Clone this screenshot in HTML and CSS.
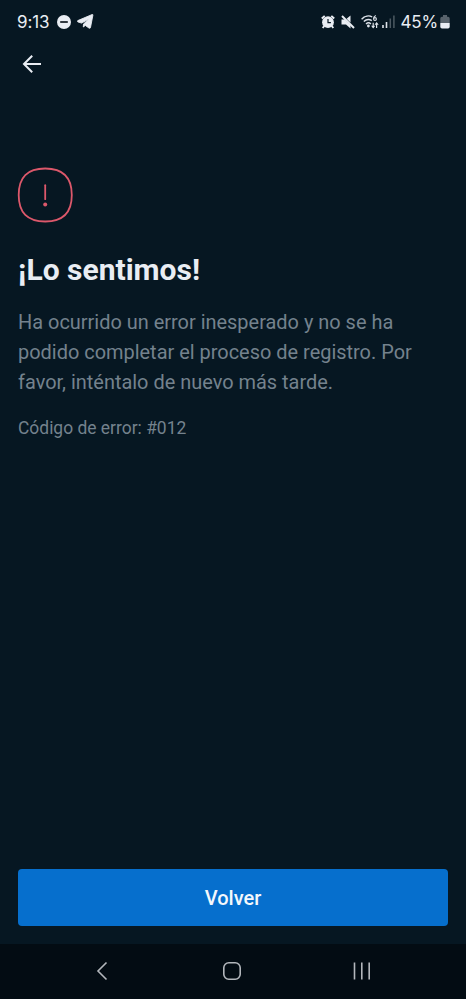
FILE: index.html
```html
<!DOCTYPE html>
<html lang="es">
<head>
<meta charset="utf-8">
<meta name="viewport" content="width=device-width, initial-scale=1">
<title>Registro</title>
<link rel="stylesheet" href="styles.css">
</head>
<body>
<div class="screen">
  <header class="status">
    <span class="clock">9:13</span>
    <svg class="dnd" width="14" height="14" viewBox="0 0 14 14"><circle cx="7" cy="7" r="7" fill="#e9edf3"/><path d="M3.2 7h7.6" stroke="#101820" stroke-width="1.7"/></svg>
    <svg class="plane" width="17" height="15" viewBox="0 0 17 15"><path d="M15.2.5.8 6.6c-.6.4-.5 1 .1 1.300l3.700 1.200L11.800 5 6.500 10l-.2 3 2-1.600 3.600 2.600c.8.5 1.400.3 1.600-.6L15.900 1.100c.1-.5-.2-.8-.7-.6z" fill="#e9edf3" stroke="#e9edf3" stroke-width=".9"/></svg>
    <span class="grow"></span>
    <svg class="alarm" width="14" height="14" viewBox="0 0 14 14"><circle cx="7" cy="7.200" r="5.900" fill="#e9edf3"/><path d="M.8 3.500 3.700.9M13.200 3.500 10.300.9M3.200 11l-1.500 2M10.800 11l1.500 2" stroke="#e9edf3" stroke-width="1.900"/><path d="M7 4v3.600h2.900" fill="none" stroke="#061722" stroke-width="1.200"/></svg>
    <svg class="mute" width="14" height="14" viewBox="0 0 14 14"><path d="M.5 4.600h3.200l5.800 5.700v3.200L5 9.400H.5zM9.500.6v6.800L5.600 3.800z" fill="#e9edf3"/><path d="m1 1 12 12" stroke="#e9edf3" stroke-width="1.900"/></svg>
    <svg class="wifi" width="18" height="14" viewBox="0 0 18 14"><g fill="none" stroke="#dce2e9" stroke-width="1.400"><path d="M.6 4.200C3.700.9 8.100.3 11.200 2M2.800 6.600c2.400-2.400 5.400-2.700 8-.9M5 9c1.500-1.400 3.500-1.400 4.900 0"/><path d="M14.800.5c-1.400.5-2.200 1.700-2.200 3.200" stroke-width="1.100"/><circle cx="14" cy="4" r="1.400" stroke-width="1.100"/><path d="M12.200 7.700v4.800M15.600 13V8.200" stroke-width="1.200"/></g><circle cx="7.400" cy="11" r="1.400" fill="#dce2e9"/><path d="m10.100 10.700 2.100 2.700 2.100-2.700zM13.500 9.800l2.100-2.700 2.100 2.700z" fill="#dce2e9"/></svg>
    <svg class="signal" width="13" height="13" viewBox="0 0 13 13"><path d="M1 10v3M4.500 7v6" stroke="#dce2e9" stroke-width="1.600"/><path d="M8.300 3.500V13M11.900.5V13" stroke="#4c5962" stroke-width="1.500"/></svg>
    <span class="percent">45%</span>
    <svg class="battery" width="10" height="14" viewBox="0 0 10 14"><path d="M3 0h4v1.700h1Q9.700 1.700 9.700 3.400V8H.3V3.400Q.3 1.700 2 1.700h1z" fill="#57626b"/><path d="M.3 8h9.400v3.800q0 1.700-1.700 1.700H2Q.3 13.500.3 11.800z" fill="#e9edf3"/></svg>
  </header>
  <nav class="toolbar">
    <svg width="20" height="20" viewBox="0 0 20 20"><path d="M19 10H2.500M10.200 1.800 2 10l8.200 8.200" fill="none" stroke="#e9edf3" stroke-width="2"/></svg>
  </nav>
  <main class="content">
    <svg class="error-icon" width="56" height="56" viewBox="0 0 56 56"><path d="M28.200 1.500C46 1.500 54.800 10.200 54.800 28S46 54.500 28.200 54.500 1.700 45.800 1.700 28 10.400 1.500 28.200 1.500z" fill="none" stroke="#dc586b" stroke-width="1.800"/><path d="M28.200 18.200v14" stroke="#dc586b" stroke-width="1.800" stroke-linecap="round"/><circle cx="28.200" cy="37.600" r="2" fill="#dc586b"/></svg>
    <h1>¡Lo sentimos!</h1>
    <p class="message">Ha ocurrido un error inesperado y no se ha<br>podido completar el proceso de registro. Por<br>favor, inténtalo de nuevo más tarde.</p>
    <p class="code">Código de error: #012</p>
  </main>
  <button class="primary" type="button">Volver</button>
  <footer class="system-nav">
    <svg width="12" height="20" viewBox="0 0 12 20"><path d="M10.500 1.500 2 10l8.500 8.500" fill="none" stroke="#b3b7bc" stroke-width="1.600"/></svg>
    <svg class="home" width="20" height="20" viewBox="0 0 20 20"><rect x="1.800" y="1.800" width="16.400" height="16.400" rx="5" fill="none" stroke="#b3b7bc" stroke-width="1.600"/></svg>
    <svg width="18" height="20" viewBox="0 0 18 20"><path d="M1.500 1.500v17M8.800 1.500v17M16.200 1.500v17" stroke="#b3b7bc" stroke-width="1.600"/></svg>
  </footer>
</div>
</body>
</html>
```
FILE: styles.css
```css
* { box-sizing: border-box; }
body { margin: 0; background: #061722; font-family: Roboto, sans-serif; }
svg { display: block; flex: none; }
.screen { display: flex; flex-direction: column; width: 466px; height: 999px; color: #e9edf3; }
.status { display: flex; align-items: center; height: 43px; padding: 0 16px 0 17px; font: 17px/20px Inter, sans-serif; }
.clock { width: 40px; letter-spacing: -0.1px; }
.plane { margin-left: 6px; }
.grow { flex: 1; }
.mute { margin-left: 6px; }
.wifi { margin-left: 6px; }
.signal { margin-left: 3px; }
.percent { margin-left: 6px; letter-spacing: -0.2px; }
.battery { margin-left: 2px; }
.toolbar { display: flex; align-items: center; height: 43px; padding: 0 0 2px 22px; }
.content { flex: 1; padding: 81px 17px 0; }
h1 { margin: 29px 0 0 1px; font-size: 30px; line-height: 36px; font-weight: 700; }
.message { margin: 19px 0 0 1px; color: #74828d; font-size: 19.950px; line-height: 30px; white-space: nowrap; }
.code { margin: 19px 0 0 1px; color: #74828d; font-size: 17.450px; line-height: 24px; }
.primary { height: 57px; margin: 0 18px 18px; padding: 0; border: 0; border-radius: 4px; background: #066fcd; color: #f4f8fc; font: 500 20px/24px Roboto, sans-serif; }
.system-nav { display: flex; align-items: center; justify-content: space-between; height: 55px; padding: 0 95px 1px 96px; background: #030c13; }
.home { margin-left: 3px; }
```
